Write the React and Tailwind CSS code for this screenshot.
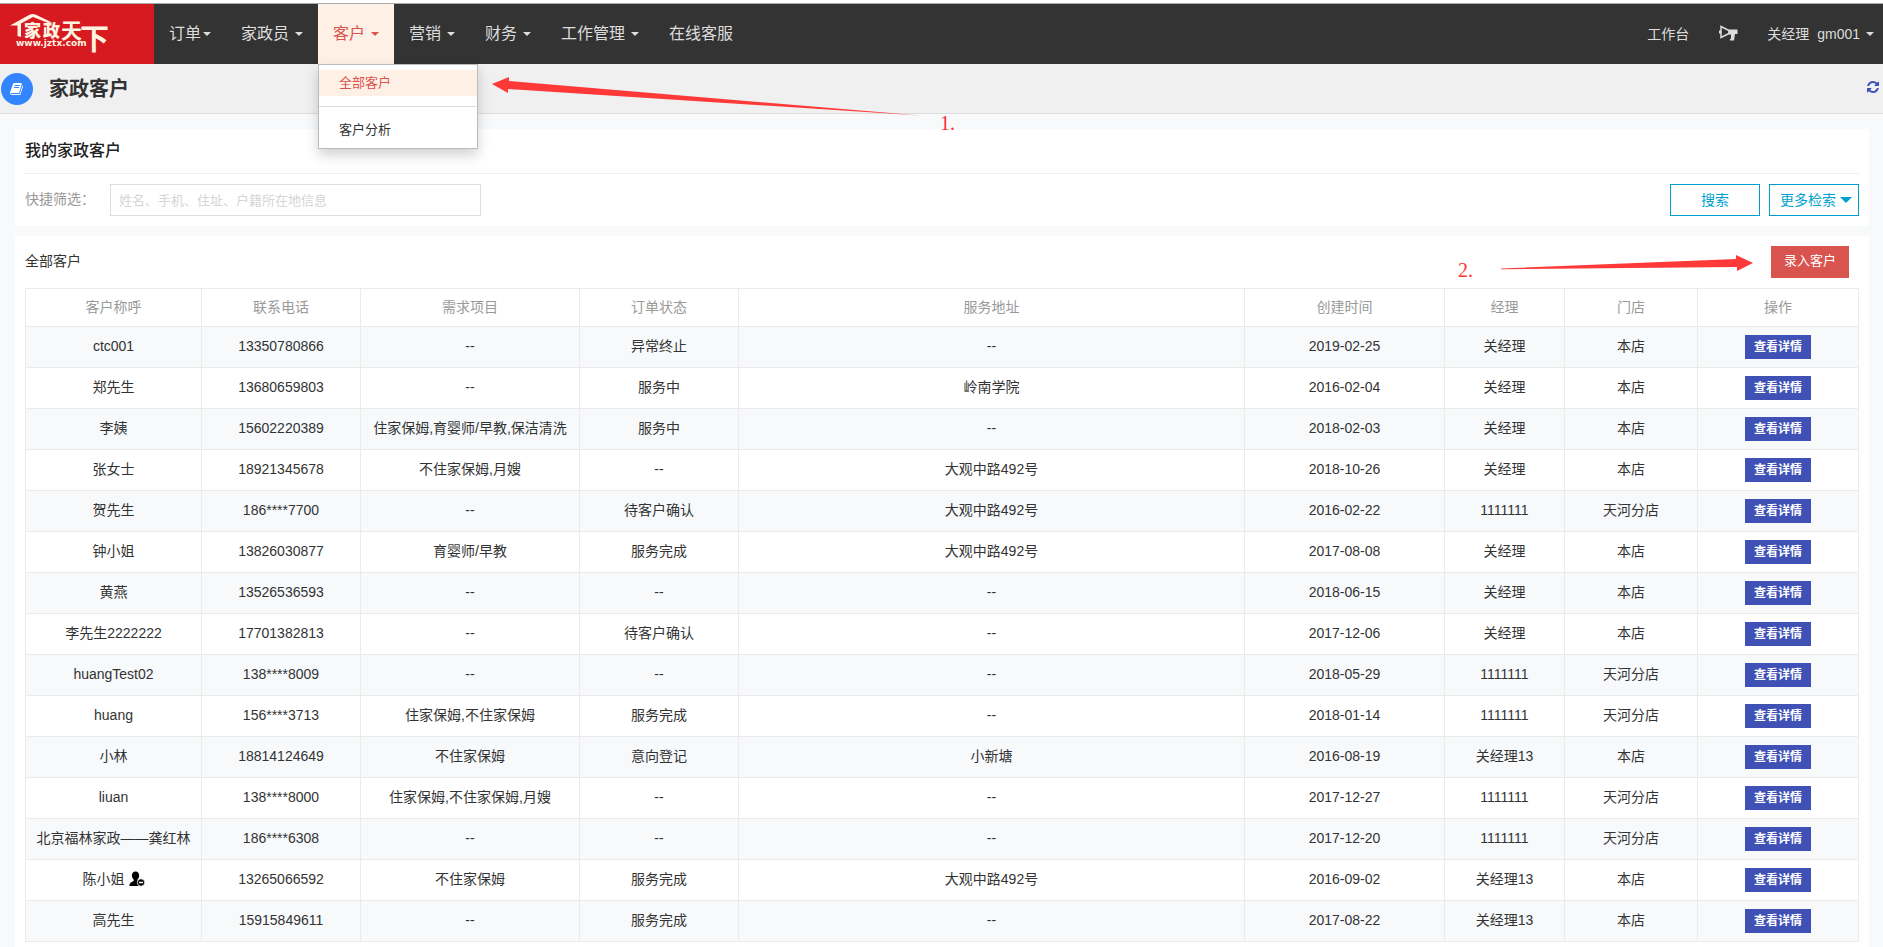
import React, { useState } from 'react';

const FONT = "font-['Liberation_Sans','Noto_Sans_CJK_SC',sans-serif]";

const navItems = [
  { label: '订单', caret: true, tight: true },
  { label: '家政员', caret: true },
  { label: '客户', caret: true, active: true },
  { label: '营销', caret: true },
  { label: '财务', caret: true },
  { label: '工作管理', caret: true },
  { label: '在线客服' },
];

const columns = [
  { title: '客户称呼', width: 'w-[176px]' },
  { title: '联系电话', width: 'w-[159px]' },
  { title: '需求项目', width: 'w-[219px]' },
  { title: '订单状态', width: 'w-[159px]' },
  { title: '服务地址', width: '' },
  { title: '创建时间', width: 'w-[200px]' },
  { title: '经理', width: 'w-[120px]' },
  { title: '门店', width: 'w-[133px]' },
  { title: '操作', width: 'w-[161px]' },
];

const customers = [
  ['ctc001', '13350780866', '--', '异常终止', '--', '2019-02-25', '关经理', '本店'],
  ['郑先生', '13680659803', '--', '服务中', '岭南学院', '2016-02-04', '关经理', '本店'],
  ['李姨', '15602220389', '住家保姆,育婴师/早教,保洁清洗', '服务中', '--', '2018-02-03', '关经理', '本店'],
  ['张女士', '18921345678', '不住家保姆,月嫂', '--', '大观中路492号', '2018-10-26', '关经理', '本店'],
  ['贺先生', '186****7700', '--', '待客户确认', '大观中路492号', '2016-02-22', '1111111', '天河分店'],
  ['钟小姐', '13826030877', '育婴师/早教', '服务完成', '大观中路492号', '2017-08-08', '关经理', '本店'],
  ['黄燕', '13526536593', '--', '--', '--', '2018-06-15', '关经理', '本店'],
  ['李先生2222222', '17701382813', '--', '待客户确认', '--', '2017-12-06', '关经理', '本店'],
  ['huangTest02', '138****8009', '--', '--', '--', '2018-05-29', '1111111', '天河分店'],
  ['huang', '156****3713', '住家保姆,不住家保姆', '服务完成', '--', '2018-01-14', '1111111', '天河分店'],
  ['小林', '18814124649', '不住家保姆', '意向登记', '小新塘', '2016-08-19', '关经理13', '本店'],
  ['liuan', '138****8000', '住家保姆,不住家保姆,月嫂', '--', '--', '2017-12-27', '1111111', '天河分店'],
  ['北京福林家政——龚红林', '186****6308', '--', '--', '--', '2017-12-20', '1111111', '天河分店'],
  ['陈小姐', '13265066592', '不住家保姆', '服务完成', '大观中路492号', '2016-09-02', '关经理13', '本店'],
  ['高先生', '15915849611', '--', '服务完成', '--', '2017-08-22', '关经理13', '本店'],
];

// customers that carry the "removed" badge
const flagged = ['陈小姐'];

const Caret = ({ className = '' }) => (
  <span className={`inline-block border-x-4 border-t-4 border-x-transparent border-t-current ${className}`} />
);

const Logo = () => (
  <svg width="154" height="60" viewBox="0 0 154 60" role="img" aria-label="家政天下" fill="#fff3e2">
    <path d="M10 21.5 L30 10.500 Q33 9.200 36 10.800 L52 18.500 L48 19 L33 13 L21 19.500 L21 33 L17.500 32 L17.500 21.500 Z" />
    <text x="24" y="33" fontSize="17" fontWeight="900" fontFamily="Noto Sans CJK SC, sans-serif">家</text>
    <text x="43" y="33" fontSize="17" fontWeight="900" fontFamily="Noto Sans CJK SC, sans-serif">政</text>
    <text x="61" y="34" fontSize="21" fontWeight="700" fontFamily="Noto Sans CJK SC, sans-serif">天</text>
    <text x="80" y="46" fontSize="29" fontWeight="700" fontFamily="Noto Sans CJK SC, sans-serif">下</text>
    <text x="16" y="42" fontSize="9" fontWeight="700" fontFamily="DejaVu Sans, sans-serif">www.jztx.com</text>
  </svg>
);

const BookIcon = () => (
  <svg width="14" height="14" viewBox="0 0 1792 1792" fill="currentColor" aria-hidden="true">
    <path d="M1639 478q40 57 18 129l-275 906q-19 64-76.5 107.5t-122.5 43.5h-923q-77 0-148.500-53.500t-99.500-131.500q-24-67-2-127 0-4 3-27t4-37q1-8-3-21.500t-3-19.500q2-11 8-21t16.500-23.500 16.500-23.500q23-38 45-91.500t30-91.500q3-10 .5-30t-.5-28q3-11 17-28t17-23q21-36 42-92t25-90q1-9-2.500-32t.5-28q4-13 22-30.500t22-22.500q19-26 42.500-84.500t27.500-96.500q1-8-3-25.500t-2-26.500q2-8 9-18t18-23 17-21q8-12 16.500-30.500t15-35 16-36 19.500-32 26.500-23.500 36-11.500 47.500 5.500l-1 3q38-9 51-9h761q74 0 114 56t18 130l-274 906q-36 119-71.500 153.500t-128.500 34.500h-869q-27 0-38 15-11 16-1 43 24 70 144 70h923q29 0 56-15.500t35-41.500l300-987q7-22 5-57 38 15 59 43zm-1064 2q-4 13 2 22.500t20 9.500h608q13 0 25.500-9.500t16.500-22.500l21-64q4-13-2-22.500t-20-9.500h-608q-13 0-25.500 9.500t-16.500 22.500zm-83 256q-4 13 2 22.500t20 9.500h608q13 0 25.500-9.500t16.500-22.500l21-64q4-13-2-22.500t-20-9.500h-608q-13 0-25.500 9.500t-16.500 22.500z" />
  </svg>
);

const RefreshIcon = () => (
  <svg width="14" height="14" viewBox="0 0 1792 1792" fill="currentColor" aria-hidden="true">
    <path d="M1639 1056q0 5-1 7-64 268-268 434.500t-478 166.500q-146 0-282.500-55t-243.500-157l-129 129q-19 19-45 19t-45-19-19-45v-448q0-26 19-45t45-19h448q26 0 45 19t19 45-19 45l-137 137q71 66 161 102t187 36q134 0 250-65t186-179q11-17 53-117 8-23 30-23h192q13 0 22.500 9.500t9.500 22.500zm25-800v448q0 26-19 45t-45 19h-448q-26 0-45-19t-19-45 19-45l138-138q-148-137-349-137-134 0-250 65t-186 179q-11 17-53 117-8 23-30 23h-199q-13 0-22.500-9.500t-9.500-22.500v-7q65-268 270-434.500t480-166.500q146 0 284 55.500t245 156.500l130-129q19-19 45-19t45 19 19 45z" />
  </svg>
);

const HornIcon = () => (
  <svg width="20" height="18" viewBox="0 0 20 18" aria-hidden="true">
    <path d="M2 1.500 L10 5.500 V8.500 L2 12.500 Z" fill="none" stroke="#ddd" strokeWidth="1.500" />
    <path d="M0 5.500 H2 V8.500 H0 Z" fill="#ddd" />
    <path d="M9.500 4.500 H18.500 V9 H16 L15 15.500 H11 V13.800 H12 V9.500 H9.500 Z" fill="#ddd" />
  </svg>
);

const UserMinusIcon = () => (
  <svg width="16" height="16" viewBox="0 0 16 16" className="ml-1 inline-block align-[-3px]" aria-hidden="true">
    <path d="M6.500 0.500 C9 0.500 10.200 2.200 10.200 4.500 C10.200 6.300 9.500 7.600 8.500 8.500 L8.500 10 L13 12.500 V15 H0.500 C0.500 12 1.500 11.500 4.700 10 V8.500 C3.600 7.600 2.900 6.300 2.900 4.500 C2.900 2.200 4 0.500 6.500 0.500 Z" />
    <circle cx="12" cy="11.500" r="3.700" stroke="#fff" strokeWidth="0.800" />
    <path d="M10 11.500 H14" stroke="#fff" strokeWidth="1.500" />
  </svg>
);

const CustomerMenu = () => (
  <div className="absolute left-0 top-full z-20 w-40 border border-[#bbb] bg-white py-[5px] text-[13px] leading-[26px] shadow-[0_6px_12px_rgba(0,0,0,0.18)]">
    <a href="#all" className="block bg-[#fff0e5] px-5 text-[#d9534f]">全部客户</a>
    <div className="my-[10px] h-px bg-[#ddd]" />
    <a href="#analysis" className="block px-5 text-[#333]">客户分析</a>
  </div>
);

const App = () => {
  const [keyword, setKeyword] = useState('');

  return (
    <div className={`relative min-h-screen bg-[#f7f9fb] text-sm text-[#333] ${FONT}`}>
      <header className="mt-[3px] flex h-[61px] border-t border-[#aaa] bg-[#333] text-[#ddd]">
        <a href="#home" className="block w-[154px] shrink-0 bg-[#d71920]">
          <Logo />
        </a>
        <nav className="flex text-base">
          {navItems.map((item) => (
            <div key={item.label} className="relative">
              <a
                href="#nav"
                className={`flex h-[60px] items-center whitespace-nowrap px-[15px] ${
                  item.active ? 'bg-[#fff0e5] text-[#d9534f]' : ''
                }`}
              >
                {item.label}
                {item.caret && <Caret className={item.tight ? 'ml-0.5' : 'ml-1.5'} />}
              </a>
              {item.active && <CustomerMenu />}
            </div>
          ))}
        </nav>
        <div className="ml-auto flex items-center whitespace-nowrap pr-[9px]">
          <a href="#desk">工作台</a>
          <button type="button" aria-label="公告" className="ml-[30px] mr-7">
            <HornIcon />
          </button>
          <a href="#user" className="flex items-center">
            <span>关经理</span>
            <span className="ml-2">gm001</span>
            <Caret className="ml-1.5" />
          </a>
        </div>
      </header>

      <div className="flex h-[50px] items-center border-b border-[#ddd] bg-[#f0f0f0] pl-px pr-[3px]">
        <span className="flex size-8 items-center justify-center rounded-full bg-[#3385ff] text-white">
          <BookIcon />
        </span>
        <h1 className="ml-4 text-xl font-bold">家政客户</h1>
        <button type="button" aria-label="刷新" className="ml-auto pb-1 text-[#3f51b5]">
          <RefreshIcon />
        </button>
      </div>

      <main className="ml-[15px] mr-[14px] mt-[15px] flex flex-col gap-[10px]">
        <section className="bg-white px-[10px] pb-[10px]">
          <h2 className="border-b border-[#eee] py-[10px] text-base font-medium leading-6 text-[#222]">我的家政客户</h2>
          <div className="mt-[10px] flex h-8 items-center">
            <label htmlFor="keyword" className="w-[85px] pb-0.5 text-[#999]">快捷筛选：</label>
            <input
              id="keyword"
              type="text"
              value={keyword}
              onChange={(e) => setKeyword(e.target.value)}
              placeholder="姓名、手机、住址、户籍所在地信息"
              className="h-8 w-[371px] border border-[#ddd] px-2 text-[13px] outline-none placeholder:text-[#d5d5d5]"
            />
            <button type="button" className="ml-auto h-8 w-[90px] border border-[#009fcf] text-[#009fcf]">搜索</button>
            <button type="button" className="ml-[9px] flex h-8 w-[90px] items-center justify-end border border-[#009fcf] pr-1.5 text-[#009fcf]">
              更多检索
              <span className="ml-1 inline-block border-x-[6px] border-t-[6px] border-x-transparent border-t-current" />
            </button>
          </div>
        </section>

        <section className="bg-white p-[10px]">
          <div className="flex h-8 items-center pr-[10px]">
            <h3 className="pb-0.5">全部客户</h3>
            <span className="ml-auto mt-4 font-['Liberation_Serif',serif] text-xl text-[#f33]">2.</span>
            <svg width="252" height="16" viewBox="0 0 252 16" className="ml-7 mr-[18px] mt-0.5" fill="#ff3838" aria-hidden="true">
              <polygon points="0,13.500 235,4 235,0 252,8 236,16 236,12 0,14.200" />
            </svg>
            <button type="button" className="h-8 w-[78px] bg-[#d9534f] pb-0.5 text-[13px] text-white">录入客户</button>
          </div>

          <table className="mt-[10px] w-full table-fixed border-collapse text-center">
            <thead>
              <tr className="h-[38px]">
                {columns.map((col) => (
                  <th key={col.title} className={`border border-[#ebebeb] pb-0.5 font-normal text-[#999] ${col.width}`}>
                    {col.title}
                  </th>
                ))}
              </tr>
            </thead>
            <tbody>
              {customers.map((row) => (
                <tr key={row[0]} className="h-[41px] odd:bg-[#f7f9fb]">
                  {row.map((cell, i) => (
                    <td key={i} className="whitespace-nowrap border border-[#ebebeb] pb-0.5">
                      {cell}
                      {i === 0 && flagged.includes(cell) && <UserMinusIcon />}
                    </td>
                  ))}
                  <td className="border border-[#ebebeb]">
                    <button type="button" className="mx-auto block h-6 w-[66px] bg-[#3f51b5] text-xs font-bold text-white">
                      查看详情
                    </button>
                  </td>
                </tr>
              ))}
            </tbody>
          </table>
        </section>
      </main>

      {/* step 1 pointer to the open menu */}
      <div className="pointer-events-none absolute left-[492px] top-[74px] flex">
        <svg width="428" height="40" viewBox="0 0 428 40" fill="#ff3838" aria-hidden="true">
          <polygon points="0,7 17,0 17,4 428,38.500 16,12 16,16" />
        </svg>
        <span className="ml-5 mt-8 font-['Liberation_Serif',serif] text-xl text-[#f33]">1.</span>
      </div>
    </div>
  );
};

export default App;
